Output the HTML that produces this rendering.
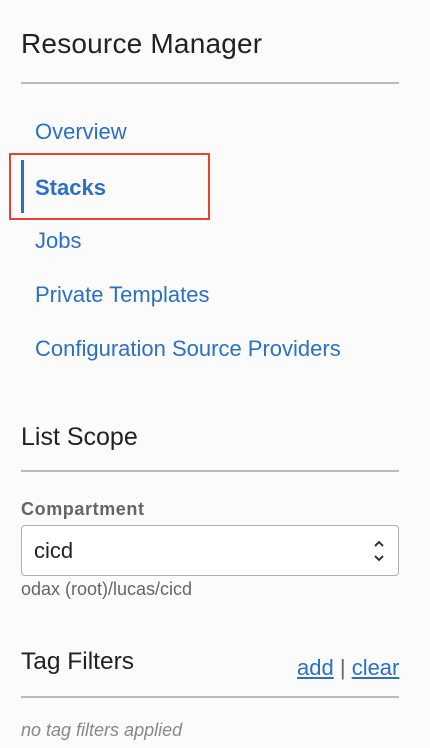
<!DOCTYPE html>
<html><head><style>
body{margin:0;width:430px;height:748px;background:#fbfbfc;font-family:"Liberation Sans",sans-serif;position:relative;overflow:hidden}
.a{position:absolute;white-space:nowrap;line-height:30px}
.h{color:#222}
.rule{position:absolute;left:21px;width:378px;height:2px;background:#b8bbbf}
.nav{font-size:22px;color:#2b6fc6;left:35px}
</style></head><body>
<div class="a h" style="left:21px;top:29px;font-size:28px;letter-spacing:.2px">Resource Manager</div>
<div class="rule" style="top:82px"></div>
<div class="a nav" style="top:117px">Overview</div>
<div class="a" style="left:21px;top:160px;width:3px;height:53px;background:#2b6fc6"></div>
<div class="a nav" style="top:173px;font-weight:bold">Stacks</div>
<div class="a" style="left:9px;top:153px;width:197px;height:63px;border:2px solid #e8442f"></div>
<div class="a nav" style="top:226px">Jobs</div>
<div class="a nav" style="top:280px">Private Templates</div>
<div class="a nav" style="top:334px">Configuration Source Providers</div>
<div class="a h" style="left:21px;top:422px;font-size:25px">List Scope</div>
<div class="rule" style="top:470px"></div>
<div class="a" style="left:21px;top:494px;font-size:18px;color:#555;font-weight:bold;opacity:.9;letter-spacing:.6px">Compartment</div>
<div class="a" style="left:21px;top:525px;width:376px;height:49px;border:1px solid #b0b0b0;border-radius:4px;background:#fff"></div>
<div class="a" style="left:34px;top:536px;font-size:22px;color:#222">cicd</div>
<svg class="a" style="left:372px;top:539px" width="14" height="24" viewBox="0 0 14 24"><path d="M3 7 L7 3 L11 7 M3 17 L7 21 L11 17" fill="none" stroke="#333" stroke-width="2"/></svg>
<div class="a" style="left:21px;top:574px;font-size:18px;color:#666">odax (root)/lucas/cicd</div>
<div class="a h" style="left:21px;top:647px;font-size:24.5px">Tag Filters</div>
<div class="a" style="left:297px;top:653px;font-size:22px;color:#2b6fc6"><span style="text-decoration:underline">add</span> <span style="color:#666">|</span> <span style="text-decoration:underline">clear</span></div>
<div class="rule" style="top:696px"></div>
<div class="a" style="left:21px;top:715px;font-size:18px;color:#888;font-style:italic">no tag filters applied</div>
</body></html>
